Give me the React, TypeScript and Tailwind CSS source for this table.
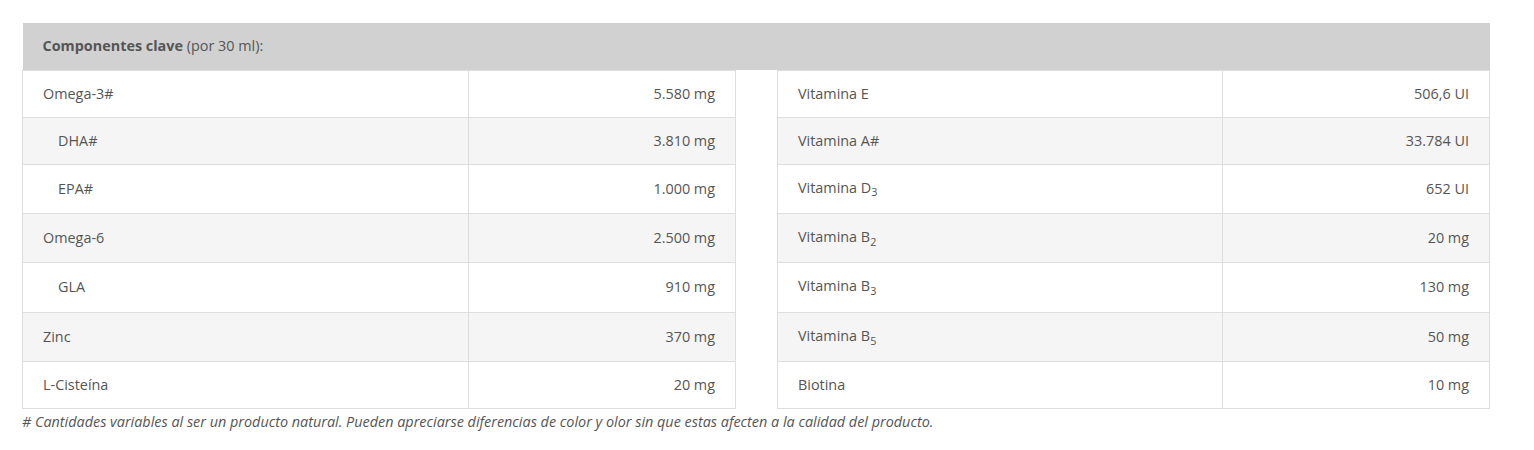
const Sub = ({ children }: { children: React.ReactNode }) => (
  <sub className="relative bottom-0 align-sub text-[75%] leading-[14.5px]">{children}</sub>
);

const left: { name: React.ReactNode; value: string; indent?: boolean }[] = [
  { name: "Omega-3#", value: "5.580 mg" },
  { name: "DHA#", value: "3.810 mg", indent: true },
  { name: "EPA#", value: "1.000 mg", indent: true },
  { name: "Omega-6", value: "2.500 mg" },
  { name: "GLA", value: "910 mg", indent: true },
  { name: "Zinc", value: "370 mg" },
  { name: "L-Cisteína", value: "20 mg" },
];

const right: { name: React.ReactNode; value: string }[] = [
  { name: "Vitamina E", value: "506,6 UI" },
  { name: "Vitamina A#", value: "33.784 UI" },
  { name: <>Vitamina D<Sub>3</Sub></>, value: "652 UI" },
  { name: <>Vitamina B<Sub>2</Sub></>, value: "20 mg" },
  { name: <>Vitamina B<Sub>3</Sub></>, value: "130 mg" },
  { name: <>Vitamina B<Sub>5</Sub></>, value: "50 mg" },
  { name: "Biotina", value: "10 mg" },
];

export default function App() {
  return (
    <div className="min-h-[450px] bg-white pt-[23px] font-['Open_Sans',sans-serif] text-[14.4px] text-[#555]">
      <div className="ml-[22px] w-[1468px]">
        <table className="w-full table-fixed border-collapse">
          <colgroup>
            <col className="w-[446px]" />
            <col className="w-[267px]" />
            <col className="w-[42px]" />
            <col className="w-[445px]" />
            <col />
          </colgroup>
          <thead>
            <tr>
              <th
                colSpan={5}
                className="h-[47px] bg-[#d1d1d1] px-[20px] text-left font-normal leading-[20px]"
              >
                <strong className="font-bold">Componentes clave</strong> (por 30 ml):
              </th>
            </tr>
          </thead>
          <tbody>
            {left.map((l, i) => {
              const r = right[i];
              const bg = i % 2 === 1 ? "bg-[#f5f5f5]" : "bg-white";
              return (
                <tr key={i}>
                  <td
                    className={`${bg} border border-[#dedede] py-[13px] pr-[20px] leading-[20px] ${
                      l.indent ? "pl-[35px]" : "pl-[20px]"
                    }`}
                  >
                    {l.name}
                  </td>
                  <td className={`${bg} border border-[#dedede] px-[20px] py-[13px] text-right leading-[20px]`}>
                    {l.value}
                  </td>
                  <td className="border-x border-[#dedede] bg-white" />
                  <td className={`${bg} border border-[#dedede] px-[20px] py-[13px] leading-[20px]`}>{r.name}</td>
                  <td className={`${bg} border border-[#dedede] px-[20px] py-[13px] text-right leading-[20px]`}>
                    {r.value}
                  </td>
                </tr>
              );
            })}
          </tbody>
        </table>
        <p className="mt-[3px] italic leading-[20px]">
          # Cantidades variables al ser un producto natural. Pueden apreciarse diferencias de color y olor sin que
          estas afecten a la calidad del producto.
        </p>
      </div>
    </div>
  );
}
